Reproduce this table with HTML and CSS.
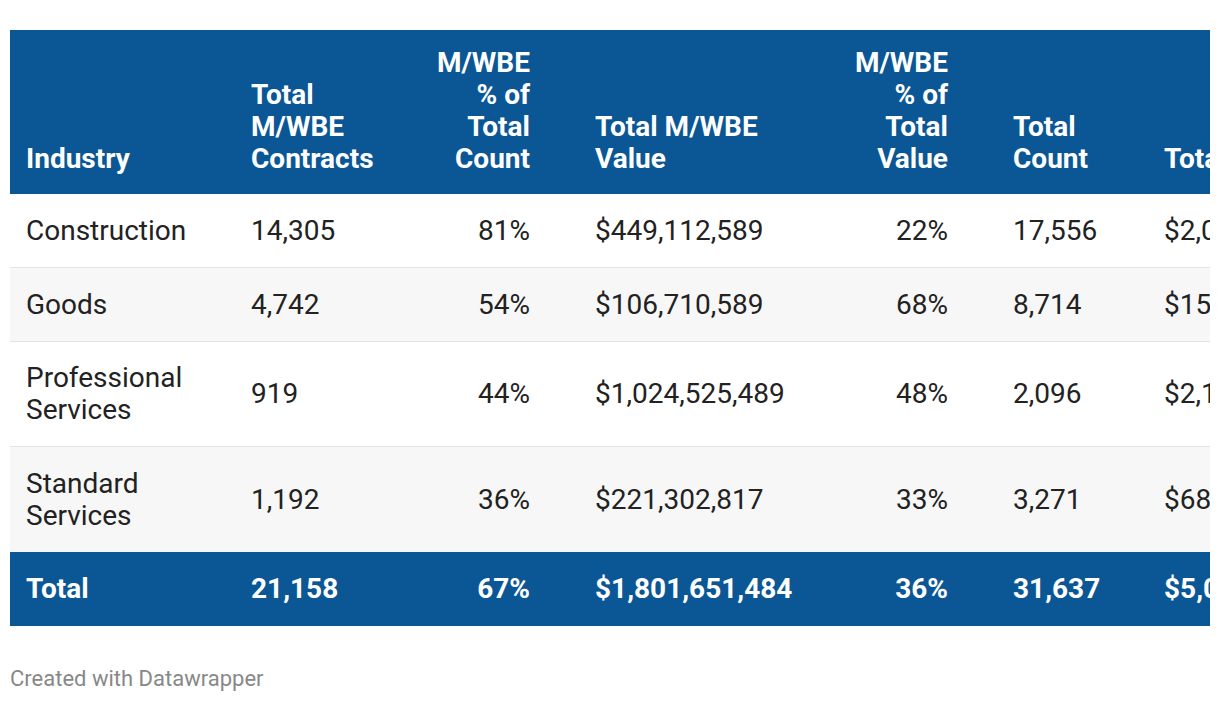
FILE: index.html
```html
<!DOCTYPE html>
<html>
<head>
<meta charset="utf-8">
<link rel="stylesheet" href="styles.css">
</head>
<body>
<div class="page">
  <div class="table-wrap">
    <table class="dw">
      <colgroup>
        <col class="w1"><col class="w2"><col class="w3"><col class="w4"><col class="w5"><col class="w6"><col class="w7">
      </colgroup>
      <thead>
        <tr>
          <th class="c1">Industry</th>
          <th class="c2">Total M/WBE Contracts</th>
          <th class="c3 num">M/WBE % of Total Count</th>
          <th class="c4">Total M/WBE Value</th>
          <th class="c5 num">M/WBE % of Total Value</th>
          <th class="c6">Total Count</th>
          <th class="c7">Total Value</th>
        </tr>
      </thead>
      <tbody>
        <tr>
          <td class="c1">Construction</td>
          <td class="c2">14,305</td>
          <td class="c3 num">81%</td>
          <td class="c4">$449,112,589</td>
          <td class="c5 num">22%</td>
          <td class="c6">17,556</td>
          <td class="c7">$2,041,420,859</td>
        </tr>
        <tr class="alt">
          <td class="c1">Goods</td>
          <td class="c2">4,742</td>
          <td class="c3 num">54%</td>
          <td class="c4">$106,710,589</td>
          <td class="c5 num">68%</td>
          <td class="c6">8,714</td>
          <td class="c7">$156,927,337</td>
        </tr>
        <tr>
          <td class="c1">Professional Services</td>
          <td class="c2">919</td>
          <td class="c3 num">44%</td>
          <td class="c4">$1,024,525,489</td>
          <td class="c5 num">48%</td>
          <td class="c6">2,096</td>
          <td class="c7">$2,134,428,102</td>
        </tr>
        <tr class="alt">
          <td class="c1">Standard Services</td>
          <td class="c2">1,192</td>
          <td class="c3 num">36%</td>
          <td class="c4">$221,302,817</td>
          <td class="c5 num">33%</td>
          <td class="c6">3,271</td>
          <td class="c7">$681,700,154</td>
        </tr>
      </tbody>
      <tfoot>
        <tr>
          <td class="c1">Total</td>
          <td class="c2">21,158</td>
          <td class="c3 num">67%</td>
          <td class="c4">$1,801,651,484</td>
          <td class="c5 num">36%</td>
          <td class="c6">31,637</td>
          <td class="c7">$5,014,476,452</td>
        </tr>
      </tfoot>
    </table>
  </div>
  <div class="credit">Created with Datawrapper</div>
</div>
</body>
</html>
```
FILE: styles.css
```css
html, body {
  margin: 0;
  padding: 0;
  background: #ffffff;
}

.page {
  padding: 30px 10px 0 10px;
  font-family: Roboto, "Liberation Sans", Arial, sans-serif;
}

.table-wrap {
  width: 1200px;
  overflow: hidden;
}

.dw {
  border-collapse: collapse;
  table-layout: fixed;
  width: 1400px;
  font-size: 28px;
  line-height: 32px;
  color: #222222;
}

.w1 { width: 224px; }
.w2 { width: 176px; }
.w3 { width: 152px; }
.w4 { width: 268px; }
.w5 { width: 150px; }
.w6 { width: 151px; }
.w7 { width: 279px; }

.dw th,
.dw td {
  text-align: left;
  vertical-align: middle;
  padding: 20.75px 17px 20px 17px;
  white-space: normal;
}

.dw .c1 {
  padding-left: 16px;
}

.dw th {
  background: #0b5795;
  color: #ffffff;
  font-weight: 700;
  vertical-align: bottom;
  padding-top: 17px;
  padding-bottom: 19px;
}

.dw tbody td {
  border-bottom: 1px solid #e4e4e4;
}

.dw tbody tr:last-child td {
  border-bottom: none;
}

.dw tbody tr.alt td {
  background: #f7f7f7;
}

.dw tfoot td {
  background: #0b5795;
  color: #ffffff;
  font-weight: 700;
  padding-top: 21px;
  padding-bottom: 21px;
}

.dw .num {
  text-align: right;
  padding-right: 32px;
}

.dw .c4,
.dw .c6,
.dw .c7 {
  padding-left: 33px;
}

.dw .c7 {
  white-space: nowrap;
}

.credit {
  margin-top: 41px;
  font-size: 22px;
  line-height: 24px;
  color: #888888;
}
```
